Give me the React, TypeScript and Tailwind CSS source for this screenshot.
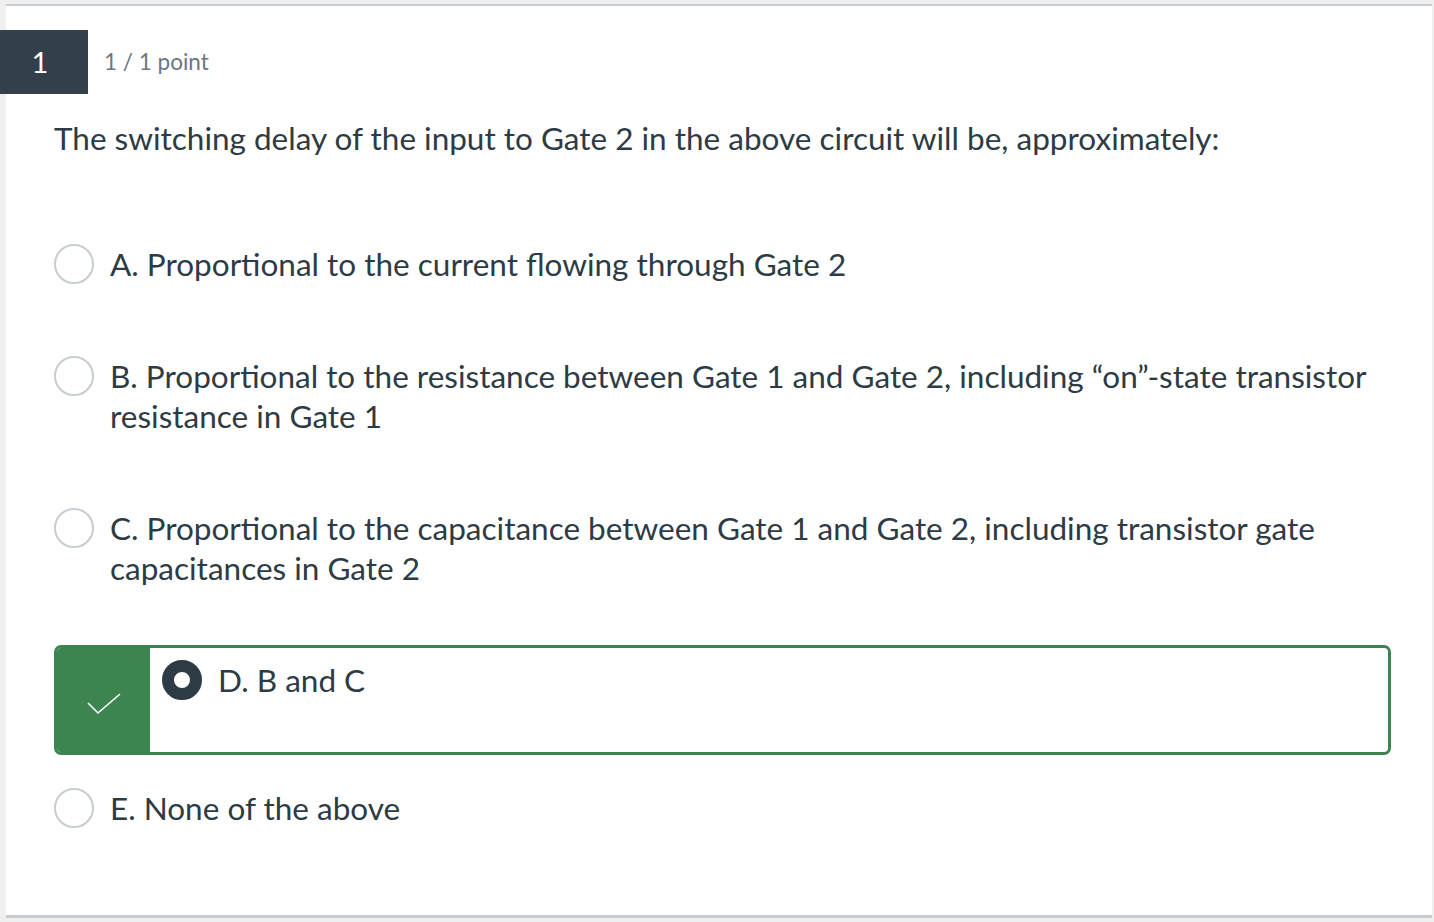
import React from "react";

interface Answer {
  label: string;
  selected?: boolean;
}

const answers: Answer[] = [
  { label: "A. Proportional to the current flowing through Gate 2" },
  {
    label:
      "B. Proportional to the resistance between Gate 1 and Gate 2, including \u201Con\u201D-state transistor resistance in Gate 1",
  },
  {
    label:
      "C. Proportional to the capacitance between Gate 1 and Gate 2, including transistor gate capacitances in Gate 2",
  },
  { label: "D. B and C", selected: true },
  { label: "E. None of the above" },
];

const Radio = ({ checked }: { checked?: boolean }) =>
  checked ? (
    <span className="block w-[40px] h-[40px] shrink-0 rounded-full border-[12px] border-[#2d3b45] bg-white" />
  ) : (
    <span className="block w-[40px] h-[40px] shrink-0 rounded-full border-2 border-[#c7cdd1] bg-white" />
  );

const CorrectAnswer = ({ label }: { label: string }) => (
  <div className="flex h-[110px] mt-[57px] mr-[41px] rounded-[7px] border-[3px] border-[#3d8550] overflow-hidden">
    <div className="w-[93px] bg-[#3d8550] flex items-center justify-center">
      <svg width="34" height="22" viewBox="0 0 34 22" fill="none" className="mt-[8px]">
        <path d="M1 10 L11 20 L33 1" stroke="white" strokeWidth="1.6" />
      </svg>
    </div>
    <div className="flex items-start gap-[16px] pl-[12px] pt-[12px]">
      <Radio checked />
      <span className="leading-[40px]">{label}</span>
    </div>
  </div>
);

export default function App() {
  return (
    <div
      className="h-[922px] bg-[#efefef] pl-[6px] pt-[4px] pr-[2px] text-[#2d3b45]"
      style={{ fontFamily: "Lato, 'Noto Sans', sans-serif" }}
    >
      <div className="h-[914px] bg-white border-t-2 border-b-[3px] border-[#c7cdd1]">
        <div className="flex items-center mt-[24px] -ml-[6px]">
          <div className="w-[88px] h-[64px] bg-[#333f4b] text-white text-[29px] flex items-center justify-center pr-[8px]">
            1
          </div>
          <div className="ml-[16px] text-[22.5px] text-[#6b7780]">1 / 1 point</div>
        </div>

        <div className="pl-[48px] text-[31.5px]">
          <p className="mt-[24px] leading-[40px]">
            The switching delay of the input to Gate 2 in the above circuit will be, approximately:
          </p>

          {answers.map((a, i) =>
            a.selected ? (
              <CorrectAnswer key={i} label={a.label} />
            ) : (
              <div
                key={i}
                className={
                  "flex items-start gap-[16px] pr-[40px] " +
                  (i === 0 ? "mt-[86px]" : i === 4 ? "mt-[33px]" : "mt-[72px]")
                }
              >
                <Radio />
                <span className="leading-[40px]">{a.label}</span>
              </div>
            )
          )}
        </div>
      </div>
    </div>
  );
}
